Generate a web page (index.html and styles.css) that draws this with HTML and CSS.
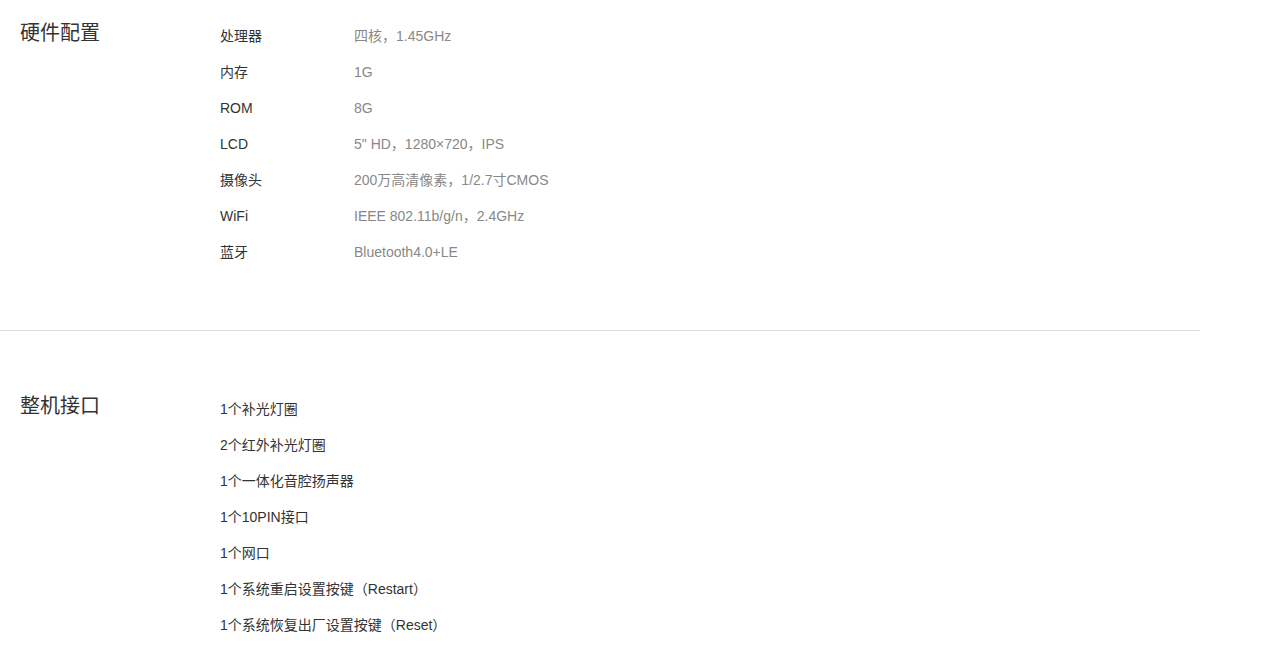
FILE: index.html
```html
<!DOCTYPE html>
<html lang="zh-CN">
<head>
    <meta charset="UTF-8">
    <title>产品参数</title>
    <link rel="stylesheet" href="styles.css">
</head>
<body>

<div class="params">
    <div class="section">
        <h2 class="section-title">硬件配置</h2>
        <ul class="spec-list">
            <li><span class="spec-name">处理器</span><span class="spec-value">四核，1.45GHz</span></li>
            <li><span class="spec-name">内存</span><span class="spec-value">1G</span></li>
            <li><span class="spec-name">ROM</span><span class="spec-value">8G</span></li>
            <li><span class="spec-name">LCD</span><span class="spec-value">5" HD，1280×720，IPS</span></li>
            <li><span class="spec-name">摄像头</span><span class="spec-value">200万高清像素，1/2.7寸CMOS</span></li>
            <li><span class="spec-name">WiFi</span><span class="spec-value">IEEE 802.11b/g/n，2.4GHz</span></li>
            <li><span class="spec-name">蓝牙</span><span class="spec-value">Bluetooth4.0+LE</span></li>
        </ul>
    </div>

    <div class="section">
        <h2 class="section-title">整机接口</h2>
        <ul class="spec-list">
            <li>1个补光灯圈</li>
            <li>2个红外补光灯圈</li>
            <li>1个一体化音腔扬声器</li>
            <li>1个10PIN接口</li>
            <li>1个网口</li>
            <li>1个系统重启设置按键（Restart）</li>
            <li>1个系统恢复出厂设置按键（Reset）</li>
        </ul>
    </div>
</div>

</body>
</html>
```

FILE: styles.css
```css
body {
    margin: 0;
    background: #fff;
    font-family: "Liberation Sans", Arial, "Noto Sans CJK SC", sans-serif;
    color: #333;
}

.params {
    width: 1200px;
}

.section {
    display: flex;
    padding: 18px 0 60px;
    border-bottom: 1px solid #ddd;
}

.section + .section {
    padding: 60px 0 20px;
    border-bottom: none;
}

.section-title {
    width: 220px;
    margin: 0;
    padding-left: 20px;
    box-sizing: border-box;
    font-size: 20px;
    font-weight: normal;
    line-height: 30px;
    color: #333;
}

.spec-list {
    list-style: none;
    margin: 0;
    padding: 0;
    font-size: 14px;
    line-height: 36px;
}

.spec-list li {
    display: flex;
    height: 36px;
}

.spec-name {
    width: 134px;
}

.spec-value {
    color: #888;
}
```
